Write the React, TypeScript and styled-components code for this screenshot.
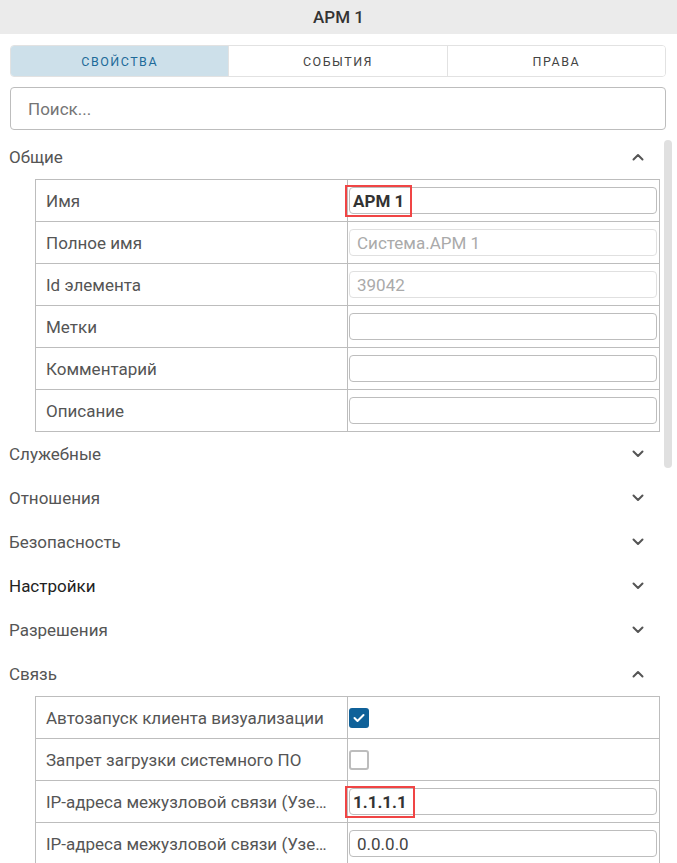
import React from 'react';
import styled, { createGlobalStyle } from 'styled-components';

const GlobalStyle = createGlobalStyle`
  html, body {
    margin: 0;
    padding: 0;
    background: #fff;
  }
  body {
    font-family: Roboto, "Liberation Sans", Arial, sans-serif;
    color: #444;
  }
  * {
    box-sizing: border-box;
  }
`;

const Panel = styled.div`
  width: 677px;
  height: 863px;
  overflow: hidden;
  display: flex;
  flex-direction: column;
`;

const TitleBar = styled.header`
  height: 34px;
  background: #ebebeb;
  display: flex;
  align-items: center;
  justify-content: center;
  font-size: 17px;
  font-weight: 500;
  color: #333;
`;

const TabBar = styled.div`
  margin: 11px 11px 0 10px;
  height: 32px;
  display: flex;
  border: 1px solid #e2e2e2;
  border-radius: 4px;
  overflow: hidden;
`;

const Tab = styled.div<{ $active?: boolean }>`
  flex: 1;
  display: flex;
  align-items: center;
  justify-content: center;
  font-size: 12.5px;
  letter-spacing: 1.5px;
  text-transform: uppercase;
  background: ${({ $active }) => ($active ? '#cde0ea' : '#fff')};
  color: ${({ $active }) => ($active ? '#1d6a99' : '#444')};
  & + & {
    border-left: 1px solid #e2e2e2;
  }
`;

const Search = styled.div`
  margin: 10px 11px 0 10px;
  height: 43px;
  border: 1px solid #bdbdbd;
  border-radius: 4px;
  display: flex;
  align-items: center;
  padding-left: 17px;
  font-size: 17px;
  color: #757575;
`;

const Body = styled.div`
  flex: 1;
  display: flex;
  margin-top: 5px;
  min-height: 0;
`;

const Content = styled.div`
  width: 664px;
  display: flex;
  flex-direction: column;
`;

const ScrollTrack = styled.div`
  width: 8px;
  padding-top: 5px;
`;

const ScrollThumb = styled.div`
  height: 328px;
  border-radius: 4px;
  background: #e0e0e0;
`;

const SectionHead = styled.div<{ $strong?: boolean }>`
  height: 44px;
  flex-shrink: 0;
  display: flex;
  align-items: center;
  justify-content: space-between;
  padding: 0 20px 0 9px;
  font-size: 17px;
  color: ${({ $strong }) => ($strong ? '#222' : '#555')};
`;

const Grid = styled.table`
  margin: 0 4px 0 35px;
  border-collapse: collapse;
  table-layout: fixed;
  width: 625px;
  flex-shrink: 0;

  td {
    height: 42px;
    border: 1px solid #bdbdbd;
    padding: 0;
    vertical-align: middle;
  }
`;

const Label = styled.td`
  width: 312px;
  padding: 0 12px 0 10px !important;
  font-size: 17px;
  color: #555;
  white-space: nowrap;
  overflow: hidden;
  text-overflow: ellipsis;
`;

const ValueCell = styled.td`
  padding: 0 2px 0 1px !important;
`;

const Field = styled.div<{ $disabled?: boolean }>`
  height: 27px;
  border: 1px solid ${({ $disabled }) => ($disabled ? '#e0e0e0' : '#bdbdbd')};
  border-radius: 4px;
  display: flex;
  align-items: center;
  padding: 0 7px;
  font-size: 17px;
  color: ${({ $disabled }) => ($disabled ? '#aaa' : '#444')};
`;

const Mark = styled.span`
  font-weight: 700;
  color: #333;
  margin-left: -6px;
  padding: 0 2px;
  outline: 2px solid #f04545;
  outline-offset: 4px;
`;

const Check = styled.div<{ $checked?: boolean }>`
  width: 20px;
  height: 20px;
  border-radius: 3px;
  display: flex;
  align-items: center;
  justify-content: center;
  background: ${({ $checked }) => ($checked ? '#0f6199' : '#fff')};
  border: ${({ $checked }) => ($checked ? 'none' : '2px solid #bdbdbd')};
`;

const Chevron = ({ up }: { up?: boolean }) => (
  <svg width="12" height="8" viewBox="0 0 12 8">
    <polyline
      points={up ? '1.5,6.5 6,2 10.5,6.5' : '1.5,1.5 6,6 10.5,1.5'}
      fill="none"
      stroke="#555"
      strokeWidth="2"
      strokeLinecap="round"
      strokeLinejoin="round"
    />
  </svg>
);

type Row = {
  label: string;
  value?: string;
  mark?: boolean;
  disabled?: boolean;
  check?: boolean;
};

const general: Row[] = [
  { label: 'Имя', value: 'АРМ 1', mark: true },
  { label: 'Полное имя', value: 'Система.АРМ 1', disabled: true },
  { label: 'Id элемента', value: '39042', disabled: true },
  { label: 'Метки', value: '' },
  { label: 'Комментарий', value: '' },
  { label: 'Описание', value: '' },
];

const link: Row[] = [
  { label: 'Автозапуск клиента визуализации', check: true },
  { label: 'Запрет загрузки системного ПО', check: false },
  { label: 'IP-адреса межузловой связи (Узел 1, сеть 1)', value: '1.1.1.1', mark: true },
  { label: 'IP-адреса межузловой связи (Узел 1, сеть 2)', value: '0.0.0.0' },
];

const PropsTable = ({ rows }: { rows: Row[] }) => (
  <Grid>
    <tbody>
      {rows.map((r) => (
        <tr key={r.label}>
          <Label>{r.label}</Label>
          <ValueCell>
            {r.check !== undefined ? (
              <Check $checked={r.check}>
                {r.check && (
                  <svg width="12" height="10" viewBox="0 0 12 10">
                    <polyline
                      points="1.5,5 4.5,8 10.5,2"
                      fill="none"
                      stroke="#fff"
                      strokeWidth="2"
                      strokeLinecap="round"
                      strokeLinejoin="round"
                    />
                  </svg>
                )}
              </Check>
            ) : (
              <Field $disabled={r.disabled}>
                {r.mark ? <Mark>{r.value}</Mark> : r.value}
              </Field>
            )}
          </ValueCell>
        </tr>
      ))}
    </tbody>
  </Grid>
);

const App = () => (
  <>
    <GlobalStyle />
    <Panel>
      <TitleBar>АРМ 1</TitleBar>
      <TabBar>
        <Tab $active>Свойства</Tab>
        <Tab>События</Tab>
        <Tab>Права</Tab>
      </TabBar>
      <Search>Поиск...</Search>
      <Body>
        <Content>
          <SectionHead>
            Общие
            <Chevron up />
          </SectionHead>
          <PropsTable rows={general} />
          <SectionHead>
            Служебные
            <Chevron />
          </SectionHead>
          <SectionHead>
            Отношения
            <Chevron />
          </SectionHead>
          <SectionHead>
            Безопасность
            <Chevron />
          </SectionHead>
          <SectionHead $strong>
            Настройки
            <Chevron />
          </SectionHead>
          <SectionHead>
            Разрешения
            <Chevron />
          </SectionHead>
          <SectionHead>
            Связь
            <Chevron up />
          </SectionHead>
          <PropsTable rows={link} />
        </Content>
        <ScrollTrack>
          <ScrollThumb />
        </ScrollTrack>
      </Body>
    </Panel>
  </>
);

export default App;
